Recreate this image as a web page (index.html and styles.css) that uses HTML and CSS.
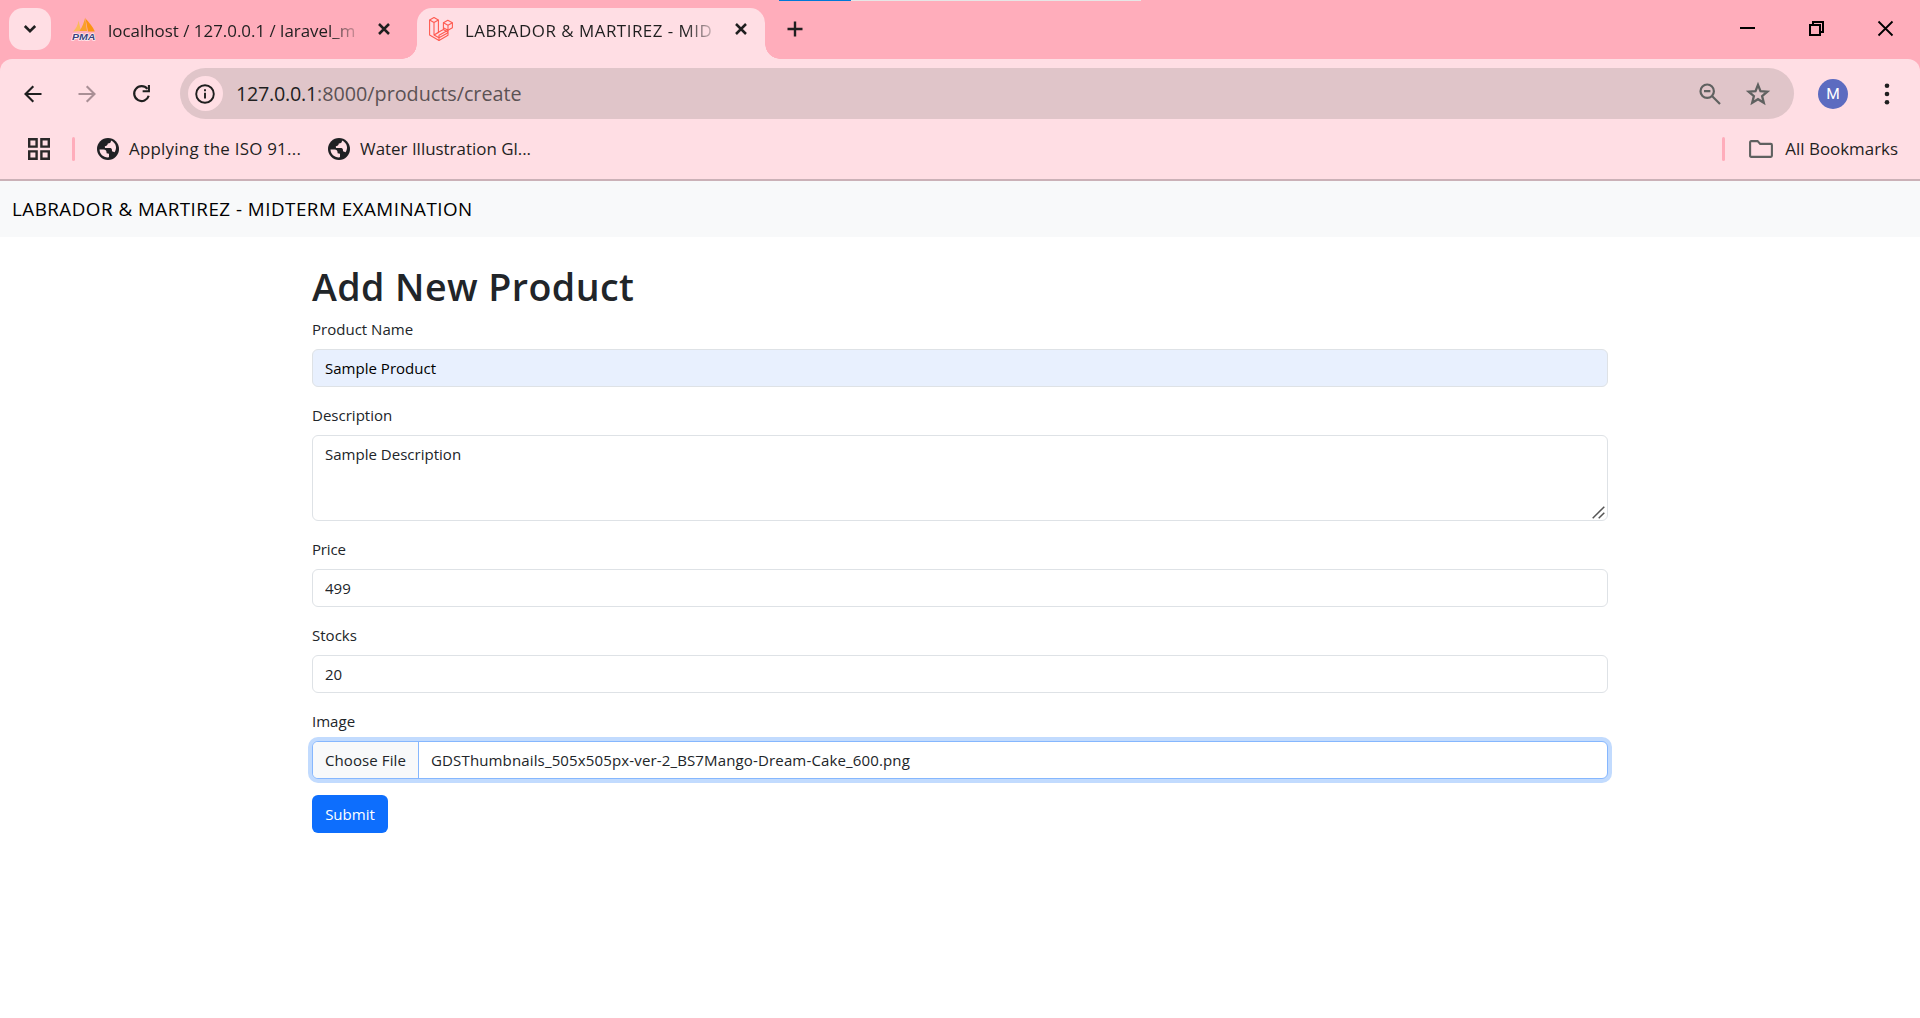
FILE: index.html
```
<!DOCTYPE html>
<html lang="en">
<head>
<meta charset="utf-8">
<title>LABRADOR &amp; MARTIREZ - MIDTERM EXAMINATION</title>
<link rel="stylesheet" href="styles.css">
</head>
<body>
<header class="browser">
  <div class="loading"><i class="loading-done"></i></div>
  <div class="tabstrip">
    <button class="tab-search" aria-label="Search tabs"><svg width="14" height="10" viewBox="0 0 14 10"><path d="M1.800 2 7 7.200 12.200 2" fill="none" stroke="#1f1f1f" stroke-width="2.600"/></svg></button>
    <div class="tab tab-idle">
      <svg class="favicon" width="24" height="24" viewBox="0 0 24 24">
        <path d="M1 14.500C4 12 6 8 6.500 3.500L9 14Z" fill="#fbb95c"/>
        <path d="M7.500 14C10.500 10 12 5 13.200.500L15 14Z" fill="#f9a02b"/>
        <path d="M13.500 1.500C17 5 21 10 22.800 14.500H16Z" fill="#fb9413"/>
        <text x="0" y="22.700" textLength="23.500" lengthAdjust="spacingAndGlyphs" class="pma-text">PMA</text>
      </svg>
      <span class="tab-title">localhost / 127.0.0.1 / laravel_m</span>
      <svg class="tab-close" width="12" height="12" viewBox="0 0 12 12"><path d="M1 1 11 11M11 1 1 11" stroke="#1f1f1f" stroke-width="2.500"/></svg>
    </div>
    <div class="tab tab-active">
      <svg class="favicon" width="24" height="24" viewBox="0 0 24 24" fill="none" stroke="#ff5a50" stroke-width="1.100" stroke-linejoin="round">
        <path d="M.600 3 5 .600 9.400 3V15.300L14.400 12.500V5.700L18.800 3.200 23.400 5.700V10.800L19 13.300V18.300L10 23.400.600 18Z"/>
        <path d="M.600 3 5 5.500 9.400 3M5 5.500V18L10 20.800 19 15.800M5 18 9.400 15.300M14.400 12.500 19 15.300M14.400 5.700 19 8.300 23.400 5.700M19 8.300V13.300L14.400 10.800M19 13.300 10 18.300V23.400M5 18 10 15.300"/>
      </svg>
      <span class="tab-title title-caps">LABRADOR &amp; MARTIREZ - MID</span>
      <svg class="tab-close" width="12" height="12" viewBox="0 0 12 12"><path d="M1 1 11 11M11 1 1 11" stroke="#1f1f1f" stroke-width="2.500"/></svg>
    </div>
    <svg class="new-tab" width="16" height="16" viewBox="0 0 16 16"><path d="M8 .500V15.500M.500 8H15.500" stroke="#1f1f1f" stroke-width="2.400"/></svg>
    <div class="window-controls">
      <svg width="15" height="15" viewBox="0 0 15 15"><path d="M0 7H15" stroke="#000" stroke-width="2"/></svg>
      <svg width="15" height="15" viewBox="0 0 15 15"><path d="M1 4H11V14H1ZM4 4V1H14V11H11" fill="none" stroke="#000" stroke-width="2"/></svg>
      <svg width="15" height="15" viewBox="0 0 15 15"><path d="M.500.500 14.500 14.500M14.500.500.500 14.500" stroke="#000" stroke-width="1.800"/></svg>
    </div>
  </div>
  <div class="toolbar">
    <div class="nav-icons">
      <svg width="18" height="18" viewBox="0 0 18 18"><path d="M17.500 9H2M9.300 1.200 1.500 9 9.300 16.800" fill="none" stroke="#1f1f1f" stroke-width="2.100"/></svg>
      <svg width="18" height="18" viewBox="0 0 18 18"><path d="M.500 9H16M8.700 1.200 16.500 9 8.700 16.800" fill="none" stroke="#a98f95" stroke-width="2.100"/></svg>
      <svg width="19" height="19" viewBox="0 0 20 20"><path d="M16.200 5.200A7.800 7.800 0 1 0 17.600 12.300" fill="none" stroke="#1f1f1f" stroke-width="2.300"/><path d="M18.900 1V8.700H11.200V6.500H16.700V1Z" fill="#1f1f1f"/></svg>
    </div>
    <div class="omnibox">
      <span class="site-info"><svg width="20" height="20" viewBox="0 0 20 20"><circle cx="10" cy="10" r="8.800" fill="none" stroke="#1f1f1f" stroke-width="1.900"/><path d="M10 8.800V14.500M10 5.200V7.200" stroke="#1f1f1f" stroke-width="1.900"/></svg></span>
      <span class="url"><span class="host">127.0.0.1</span>:8000/products/create</span>
      <svg class="zoom-icon" width="22" height="22" viewBox="0 0 22 22" fill="none" stroke="#5f6160" stroke-width="2.200"><circle cx="8.200" cy="8.200" r="6.700"/><path d="M5 8.200H11.400M13 13 21 21"/></svg>
      <svg class="star-icon" width="24" height="24" viewBox="0 0 24 24"><path d="M12 2.800 14.500 9.200 21.300 9.700 16.100 14.100 17.800 20.800 12 17.200 6.200 20.800 7.900 14.100 2.700 9.700 9.500 9.200Z" fill="none" stroke="#5f6160" stroke-width="2.300"/></svg>
    </div>
    <span class="avatar">M</span>
    <svg class="menu-icon" width="6" height="22" viewBox="0 0 6 22" fill="#1f1f1f"><circle cx="3" cy="2.700" r="2.300"/><circle cx="3" cy="11" r="2.300"/><circle cx="3" cy="19.300" r="2.300"/></svg>
  </div>
  <div class="bookmarks">
    <svg width="22" height="22" viewBox="0 0 22 22" fill="none" stroke="#2a2829" stroke-width="2.400"><path d="M1.200 1.200H8.600V8.600H1.200ZM13.400 1.200H20.800V8.600H13.400ZM1.200 13.400H8.600V20.800H1.200ZM13.400 13.400H20.800V20.800H13.400Z"/></svg>
    <i class="divider"></i>
    <a class="bookmark"><svg width="22" height="22" viewBox="0 0 22 22"><circle cx="11" cy="11" r="11" fill="#202124"/><path d="M14 2.600C14 4.800 13 5.500 10.800 5.600 10.500 7.500 9.500 8 7.800 8.200L8 10H13.500C14.800 10.300 15 11.500 15 13.300L17.600 14.200C20.200 10.500 19.500 5.200 14 2.600ZM2.500 11.500H6.500C8.800 11.700 9.800 13 9.600 15.200L12 15.700V19.300C7 20 2.700 16.500 2.500 11.500Z" fill="#ffdee4"/></svg><span class="bm-iso">Applying the ISO 91...</span></a>
    <a class="bookmark"><svg width="22" height="22" viewBox="0 0 22 22"><circle cx="11" cy="11" r="11" fill="#202124"/><path d="M14 2.600C14 4.800 13 5.500 10.800 5.600 10.500 7.500 9.500 8 7.800 8.200L8 10H13.500C14.800 10.300 15 11.500 15 13.300L17.600 14.200C20.200 10.500 19.500 5.200 14 2.600ZM2.500 11.500H6.500C8.800 11.700 9.800 13 9.600 15.200L12 15.700V19.300C7 20 2.700 16.500 2.500 11.500Z" fill="#ffdee4"/></svg><span>Water Illustration Gl...</span></a>
    <i class="divider divider-end"></i>
    <a class="bookmark all"><svg width="24" height="18" viewBox="0 0 24 18"><path d="M1.100 2.200Q1.100 1.100 2.200 1.100H8.600L11.200 3.900H21.800Q22.900 3.900 22.900 5V15.800Q22.900 16.900 21.800 16.900H2.200Q1.100 16.900 1.100 15.800Z" fill="none" stroke="#5f6160" stroke-width="2.100"/></svg><span>All Bookmarks</span></a>
  </div>
</header>
<nav class="navbar"><a class="brand">LABRADOR &amp; MARTIREZ - MIDTERM EXAMINATION</a></nav>
<main class="container">
  <h1>Add New Product</h1>
  <form>
    <div class="field"><label for="name">Product Name</label><input class="control autofilled" id="name" value="Sample Product"></div>
    <div class="field"><label for="description">Description</label><div class="textarea-wrap"><textarea class="control" id="description" rows="3">Sample Description</textarea><svg class="grip" width="13" height="13" viewBox="0 0 13 13"><path d="M.700 12.300 12.300.700M6.700 12.300 12.300 6.700" stroke="#555" stroke-width="1.500"/></svg></div></div>
    <div class="field"><label for="price" class="price-label">Price</label><input class="control" id="price" value="499"></div>
    <div class="field"><label for="stocks">Stocks</label><input class="control" id="stocks" value="20"></div>
    <div class="field"><label>Image</label><div class="control file"><span class="choose">Choose File</span><span class="filename">GDSThumbnails_505x505px-ver-2_BS7Mango-Dream-Cake_600.png</span></div></div>
    <button type="button" class="submit">Submit</button>
  </form>
</main>
</body>
</html>
```
FILE: styles.css
```
* { box-sizing: border-box; }
body {
  margin: 0;
  height: 1018px;
  overflow: hidden;
  background: #fff;
  color: #212529;
  font: 15.04px/24px "Open Sans", "Noto Sans", sans-serif;
}
svg { display: block; flex: none; overflow: visible; }
button { font: inherit; border: 0; }

.browser {
  position: relative;
  height: 181px;
  background: #ffadbb;
  border-bottom: 2px solid #cbb1b7;
  font-size: 16.92px;
  color: #1f1f1f;
}
.loading {
  position: absolute;
  top: 0;
  left: 779px;
  width: 362px;
  height: 1px;
  background: #e6e6e6;
}
.loading-done { display: block; width: 72px; height: 1px; background: #0078d7; }

.tabstrip { display: flex; height: 59px; padding: 8px 27px 0 9px; }
.tab-search {
  display: flex;
  align-items: center;
  justify-content: center;
  width: 42px;
  height: 42px;
  padding: 0;
  border-radius: 14px;
  background: #ffdee4;
}
.tab { display: flex; height: 51px; padding-top: 9px; }
.tab-idle { width: 366px; padding-left: 21px; }
.tab-active {
  position: relative;
  width: 348px;
  padding-left: 12px;
  border-radius: 15px 15px 0 0;
  background: #ffdee4;
}
.tab-active::before, .tab-active::after {
  content: "";
  position: absolute;
  bottom: 0;
  width: 15px;
  height: 15px;
}
.tab-active::before { right: 100%; background: radial-gradient(circle at 0 0, transparent 14.5px, #ffdee4 15px); }
.tab-active::after { left: 100%; background: radial-gradient(circle at 100% 0, transparent 14.5px, #ffdee4 15px); }
.tab-title {
  width: 250px;
  margin: 2px 0 0 12px;
  white-space: nowrap;
  -webkit-mask-image: linear-gradient(90deg, #000 88%, transparent 102%);
  mask-image: linear-gradient(90deg, #000 88%, transparent 102%);
}
.title-caps { margin-left: 12px; letter-spacing: .5px; }
.tab-close { margin: 6px 0 0 20px; }
.pma-text { font: italic 700 9.5px "Liberation Sans", sans-serif; fill: #3c3f7c; stroke: #fff; stroke-width: 1.2px; paint-order: stroke; }
.new-tab { margin: 13px 0 0 22px; }
.window-controls { display: flex; gap: 54px; margin: 13px 0 0 auto; }

.toolbar {
  display: flex;
  align-items: center;
  height: 69px;
  padding: 0 30px 0 24px;
  border-radius: 12px 12px 0 0;
  background: #ffdee4;
}
.nav-icons { display: flex; align-items: center; gap: 36px; width: 156px; }
.omnibox {
  display: flex;
  align-items: center;
  width: 1614px;
  height: 51px;
  padding: 0 24px 0 8px;
  border-radius: 26px;
  background: #e0c5c9;
}
.site-info {
  display: flex;
  align-items: center;
  padding-left: 7px;
  width: 35px;
  height: 35px;
  border-radius: 50%;
  background: #ffdee4;
}
.url { margin-left: 13px; font-size: 19.74px; line-height: 27px; color: #5b5254; }
.host { letter-spacing: -.25px; color: #1f1f1f; }
.zoom-icon { margin-left: auto; }
.star-icon { margin-left: 25px; }
.avatar {
  width: 30px;
  height: 30px;
  margin-left: 24px;
  border-radius: 50%;
  background: #5c6bc0;
  color: #fff;
  font: 400 15.5px/31px Roboto, sans-serif;
  text-align: center;
}
.menu-icon { margin-left: 36px; }

.bookmarks {
  display: flex;
  align-items: center;
  height: 51px;
  padding: 0 22px 9px 28px;
  background: #ffdee4;
}
.divider { width: 3px; height: 24px; margin: 0 22px; border-radius: 2px; background: #ffadbb; }
.divider-end { margin: 0 24px 0 auto; }
.bookmark { display: flex; align-items: center; gap: 10px; margin-right: 27px; white-space: nowrap; }
.bookmark span { margin-top: -1px; line-height: 23px; }
.bm-iso { letter-spacing: .24px; }
.all { gap: 12px; margin-right: 0; }

.navbar { height: 56px; padding: 13px 12px 0; background: #f8f9fa; }
.brand { display: block; color: #000; font-size: 18.8px; line-height: 30px; letter-spacing: .49px; }

.container { width: 1320px; margin: 24px auto 0; padding: 0 12px; }
h1 { height: 48px; margin: 0 0 8px; padding-top: 2px; font-size: 37.6px; line-height: 48px; font-weight: 600; letter-spacing: .43px; }
.field { margin-bottom: 16px; }
label { display: block; width: max-content; margin-bottom: 8px; }
.price-label { letter-spacing: -.2px; }
.control {
  display: block;
  width: 100%;
  height: 38px;
  padding: 6px 12px;
  border: 1px solid #dee2e6;
  border-radius: 6px;
  background: #fff;
  color: #212529;
  font: inherit;
}
.textarea-wrap { position: relative; }
textarea.control { height: 86px; resize: none; }
.grip { position: absolute; right: 3px; bottom: 2px; }
.autofilled { background: #e8f0fe; color: #000; }
.file {
  display: flex;
  padding: 0;
  overflow: hidden;
  border-color: #86b7fe;
  box-shadow: 0 0 0 4px #c2dbfe;
}
.choose { width: 106px; padding: 6px 12px; border-right: 1px solid #86b7fe; background: #f8f9fa; letter-spacing: .08px; white-space: nowrap; }
.filename { padding: 6px 12px; letter-spacing: .13px; }
.submit { display: block; width: 76px; height: 38px; padding: 0; border-radius: 6px; background: #0d6efd; color: #fff; }
```
